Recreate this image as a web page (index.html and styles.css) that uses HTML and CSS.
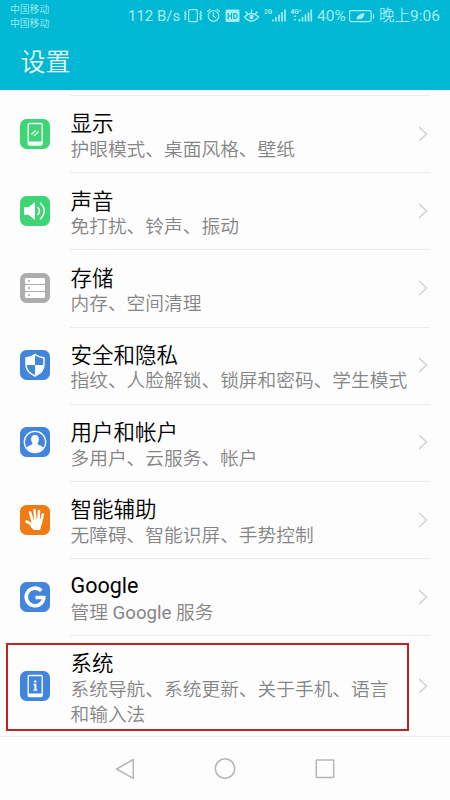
FILE: index.html
```html
<!DOCTYPE html>
<html lang="zh-CN">
<head>
<meta charset="utf-8">
<title>设置</title>
<link rel="stylesheet" href="styles.css">
</head>
<body>
<header class="top">
  <div class="status">
    <div class="carriers"><span>中国移动</span><span>中国移动</span></div>
    <div class="indicators">
      <span class="rate">112 B/s</span>
      <svg class="tray" width="134" height="20" viewBox="184 6 134 20" fill="none" stroke="currentColor" stroke-width="1.2">
        <rect x="188.7" y="9.7" width="8.6" height="12" rx="1"/>
        <path d="M186 11l-1.5 1.5 1.5 1.5-1.5 1.5 1.5 1.5-1.5 1.5 1.5 1.5M200 11l1.5 1.5-1.5 1.5 1.5 1.5-1.5 1.5 1.5 1.5-1.5 1.5"/>
        <circle cx="213.5" cy="16" r="5.3"/><path d="M213.3 12.5V16l2.7 2M207.2 11.7l3.2-2.7M219.8 11.7L216.6 9"/>
        <rect x="225.5" y="9.5" width="14" height="12.5" rx="1.5" fill="currentColor" stroke="none"/>
        <path class="cut" d="M228.2 13v6M231.4 13v6M228.2 16h3.2M233.8 13.5v5h1.3q2-.4 2-2.5t-2-2.5z"/>
        <path d="M244.5 17q7-7 14 0-7 8-14 0zM247.7 14l-2.2-2.5M251.5 12.5V9.5M255.3 14l2.2-2.5" stroke-width="1.4"/>
        <circle cx="251.5" cy="17" r="2.2" fill="currentColor" stroke="none"/>
        <g stroke-width="1.7"><path d="M272.9 21.5v-2M275.9 21.5v-4.5M279 21.5v-7M282 21.5V12M285 21.5V9.5"/><path d="M299.4 21.5v-2.5M302.5 21.5v-4.5M305.5 21.5v-7M308.5 21.5v-9M311.3 21.5V9.5"/></g>
        <path d="M295 15l-1.5 2h3zM295 21l-1.5-2h3z" fill="currentColor" stroke="none"/>
        <text x="264" y="14">2G</text><text x="290.5" y="14">4G⁺</text>
      </svg>
      <span class="percent">40%</span>
      <svg class="battery" width="26" height="14" viewBox="0 0 26 14" fill="none" stroke="currentColor" stroke-width="1.2"><rect x=".6" y="1.6" width="21.5" height="11" rx="1.5"/><path d="M24.5 5v4.5"/><path d="M7.5 10.5q0-5.5 8-6.5-.5 7-6.5 6l-1 1z" fill="currentColor" stroke="none"/></svg>
      <span class="clock">晚上<span class="latin">9:06</span></span>
    </div>
  </div>
  <h1>设置</h1>
</header>
<main>
  <section class="row">
    <svg class="icon green" viewBox="0 0 30 30"><rect x="8.2" y="4.5" width="14" height="21.5" rx="1.5" fill="none" stroke="#fff" stroke-width="1.3"/><path d="M8.5 22.5h13.5v3H8.5z" fill="#fff"/><path d="M11.5 15.5l4-4M14 17l4.5-4.5" stroke="#fff" stroke-width="1.2"/></svg>
    <div class="text"><h2>显示</h2><p>护眼模式、桌面风格、壁纸</p></div>
    <svg class="arrow" viewBox="0 0 10 16"><path d="M1 1l7.5 7L1 15"/></svg>
  </section>
  <section class="row">
    <svg class="icon green" viewBox="0 0 30 30"><path d="M4 11.3h4.5L15 6v18l-6.5-5.3H4z" fill="#fff"/><path d="M17.5 11q4 4 0 8M20 6.8q8.5 8.2 0 16.4" fill="none" stroke="#fff" stroke-width="1.5"/></svg>
    <div class="text"><h2>声音</h2><p>免打扰、铃声、振动</p></div>
    <svg class="arrow" viewBox="0 0 10 16"><path d="M1 1l7.5 7L1 15"/></svg>
  </section>
  <section class="row">
    <svg class="icon grey" viewBox="0 0 30 30"><path d="M6 5h18q1 0 1 1v4q0 1-1 1H6q-1 0-1-1V6q0-1 1-1zM6 12h18q1 0 1 1v4q0 1-1 1H6q-1 0-1-1v-4q0-1 1-1zM6 19h18q1 0 1 1v4q0 1-1 1H6q-1 0-1-1v-4q0-1 1-1z" fill="#fff"/><path d="M8 8h2M8 15h2M8 22h2" stroke="#a6a6a6" stroke-width="1.5"/></svg>
    <div class="text"><h2>存储</h2><p>内存、空间清理</p></div>
    <svg class="arrow" viewBox="0 0 10 16"><path d="M1 1l7.5 7L1 15"/></svg>
  </section>
  <section class="row">
    <svg class="icon blue" viewBox="0 0 30 30"><path d="M15 4.5q4 3 9 3.5v6.5q0 7.5-9 11.5-9-4-9-11.5V8q5-.5 9-3.5z" fill="none" stroke="#fff" stroke-width="1.5"/><path d="M15 5v10H6.5V8.500q4.500-.5 8.500-3.500zM15 15h8.500q-.5 6.500-8.500 10.500z" fill="#fff"/></svg>
    <div class="text"><h2>安全和隐私</h2><p>指纹、人脸解锁、锁屏和密码、学生模式</p></div>
    <svg class="arrow" viewBox="0 0 10 16"><path d="M1 1l7.5 7L1 15"/></svg>
  </section>
  <section class="row">
    <svg class="icon blue" viewBox="0 0 30 30"><circle cx="15" cy="15" r="10.7" fill="none" stroke="#fff" stroke-width="1.3"/><path d="M15 8c3 0 4.200 2 3.800 5-.3 2-1 2.700-1.300 3.500-.2 1.500 4.700 2 5.700 4.300Q20 25 15 25t-8.200-4.200c1-2.300 5.900-2.800 5.700-4.300-.3-.8-1-1.500-1.300-3.500C10.800 10 12 8 15 8z" fill="#fff"/></svg>
    <div class="text"><h2>用户和帐户</h2><p>多用户、云服务、帐户</p></div>
    <svg class="arrow" viewBox="0 0 10 16"><path d="M1 1l7.5 7L1 15"/></svg>
  </section>
  <section class="row">
    <svg class="icon orange" viewBox="0 0 30 30"><path d="M6.5 16.5L11 19l1.500 3M10 7.500l2.800 9M14.500 5l1 11M19 6l-.7 11M22.800 9.500L20.500 19" fill="none" stroke="#fff" stroke-width="2.600" stroke-linecap="round"/><path d="M11.500 14.500h10.200q0 5.500-1.500 10.500h-6.500q-2-2.300-4.200-6l2.500.5z" fill="#fff"/></svg>
    <div class="text"><h2>智能辅助</h2><p>无障碍、智能识屏、手势控制</p></div>
    <svg class="arrow" viewBox="0 0 10 16"><path d="M1 1l7.5 7L1 15"/></svg>
  </section>
  <section class="row">
    <svg class="icon blue" viewBox="0 0 30 30"><path d="M21.300 8.800A8.800 8.800 0 1 0 23.800 15.500H15.500" fill="none" stroke="#fff" stroke-width="3.600"/></svg>
    <div class="text"><h2 class="latin">Google</h2><p>管理 <span class="latin">Google</span> 服务</p></div>
    <svg class="arrow" viewBox="0 0 10 16"><path d="M1 1l7.5 7L1 15"/></svg>
  </section>
  <section class="row tall">
    <svg class="icon blue" viewBox="0 0 30 30"><rect x="8.2" y="4.5" width="14" height="21" rx="1" fill="none" stroke="#fff" stroke-width="1.3"/><path d="M8.500 22.500h13.500v3H8.500z" fill="#fff"/><path d="M14 9.500h2.400v2H14zM13.500 12.800h2.900v5.700h1v1.300h-4v-1.300h1v-4.200h-.9z" fill="#fff"/></svg>
    <div class="text"><h2>系统</h2><p>系统导航、系统更新、关于手机、语言和输入法</p></div>
    <svg class="arrow" viewBox="0 0 10 16"><path d="M1 1l7.5 7L1 15"/></svg>
    <div class="highlight"></div>
  </section>
</main>
<nav>
  <svg viewBox="0 0 22 22"><path d="M19.300 1.500v18.800L2.500 11z"/></svg>
  <svg viewBox="0 0 22 22"><circle cx="11" cy="10.500" r="9.700"/></svg>
  <svg viewBox="0 0 22 22"><rect x="2.300" y="2" width="17.400" height="17.400" rx=".5"/></svg>
</nav>
</body>
</html>
```
FILE: styles.css
```css
* { box-sizing: border-box; margin: 0; padding: 0; }
body {
  width: 450px;
  height: 800px;
  overflow: hidden;
  display: flex;
  flex-direction: column;
  background: #fdfdfd;
  font-family: Roboto, "Noto Sans CJK SC", sans-serif;
}
svg { display: block; flex: none; }
.top { height: 90px; flex: none; background: #00b8d3; color: #e9fbfc; }
.status { height: 32px; display: flex; justify-content: space-between; padding: 0 12px 0 10px; color: #a4edf2; }
.carriers { display: flex; flex-direction: column; padding-top: 2.5px; font-size: 9.8px; line-height: 14px; font-weight: 350; }
.indicators { display: flex; align-items: center; font-size: 15.5px; line-height: 32px; white-space: nowrap; }
.rate { width: 56px; font-size: 15px; }
.tray { margin-right: -1px; }
.tray text { font: 700 6.5px Roboto, sans-serif; fill: currentColor; stroke: none; }
.cut { stroke: #00b8d3; }
.percent { width: 32px; }
.battery { margin-right: 4px; }
.clock { width: 59px; font-weight: 350; }
h1 { padding-left: 20.5px; font-size: 25px; line-height: 62px; font-weight: 350; }
main { flex: none; height: 647px; padding-top: 5px; border-bottom: 1.5px solid #ededed; }
.row {
  position: relative;
  display: flex;
  align-items: center;
  height: 77.2px;
  padding: 0 22px 0 20px;
}
.row::before {
  content: "";
  position: absolute;
  left: 70px;
  right: 20px;
  top: 0;
  height: 1px;
  background: #ededed;
}
.row.tall { height: 101px; }
.icon { width: 30px; height: 30px; border-radius: 6.5px; }
.green { background: #3fd576; }
.grey { background: #adadad; }
.blue { background: #4285dc; }
.orange { background: #f27a14; }
.text { width: 340px; margin-left: 20.5px; padding-top: 6px; flex: none; }
h2 { font-size: 21.5px; line-height: 27.5px; font-weight: 350; color: #000; }
p { font-size: 18.72px; line-height: 25px; font-weight: 350; color: #858585; white-space: nowrap; }
.latin { font-weight: 400; }
h2.latin { line-height: 26.5px; padding-bottom: 1px; }
.tall p { width: 320px; white-space: normal; }
.arrow { width: 10px; height: 16px; margin-left: 7px; fill: none; stroke: #cecece; stroke-width: 1.3; }
.highlight { position: absolute; left: 6px; top: 7.6px; width: 403px; height: 88px; border: 2.5px solid #bd2323; }
nav { flex: 1; display: flex; justify-content: center; align-items: center; gap: 78px; }
nav svg { width: 22px; height: 22px; fill: none; stroke: #b5b5b5; stroke-width: 1.5; stroke-linejoin: round; }
```
